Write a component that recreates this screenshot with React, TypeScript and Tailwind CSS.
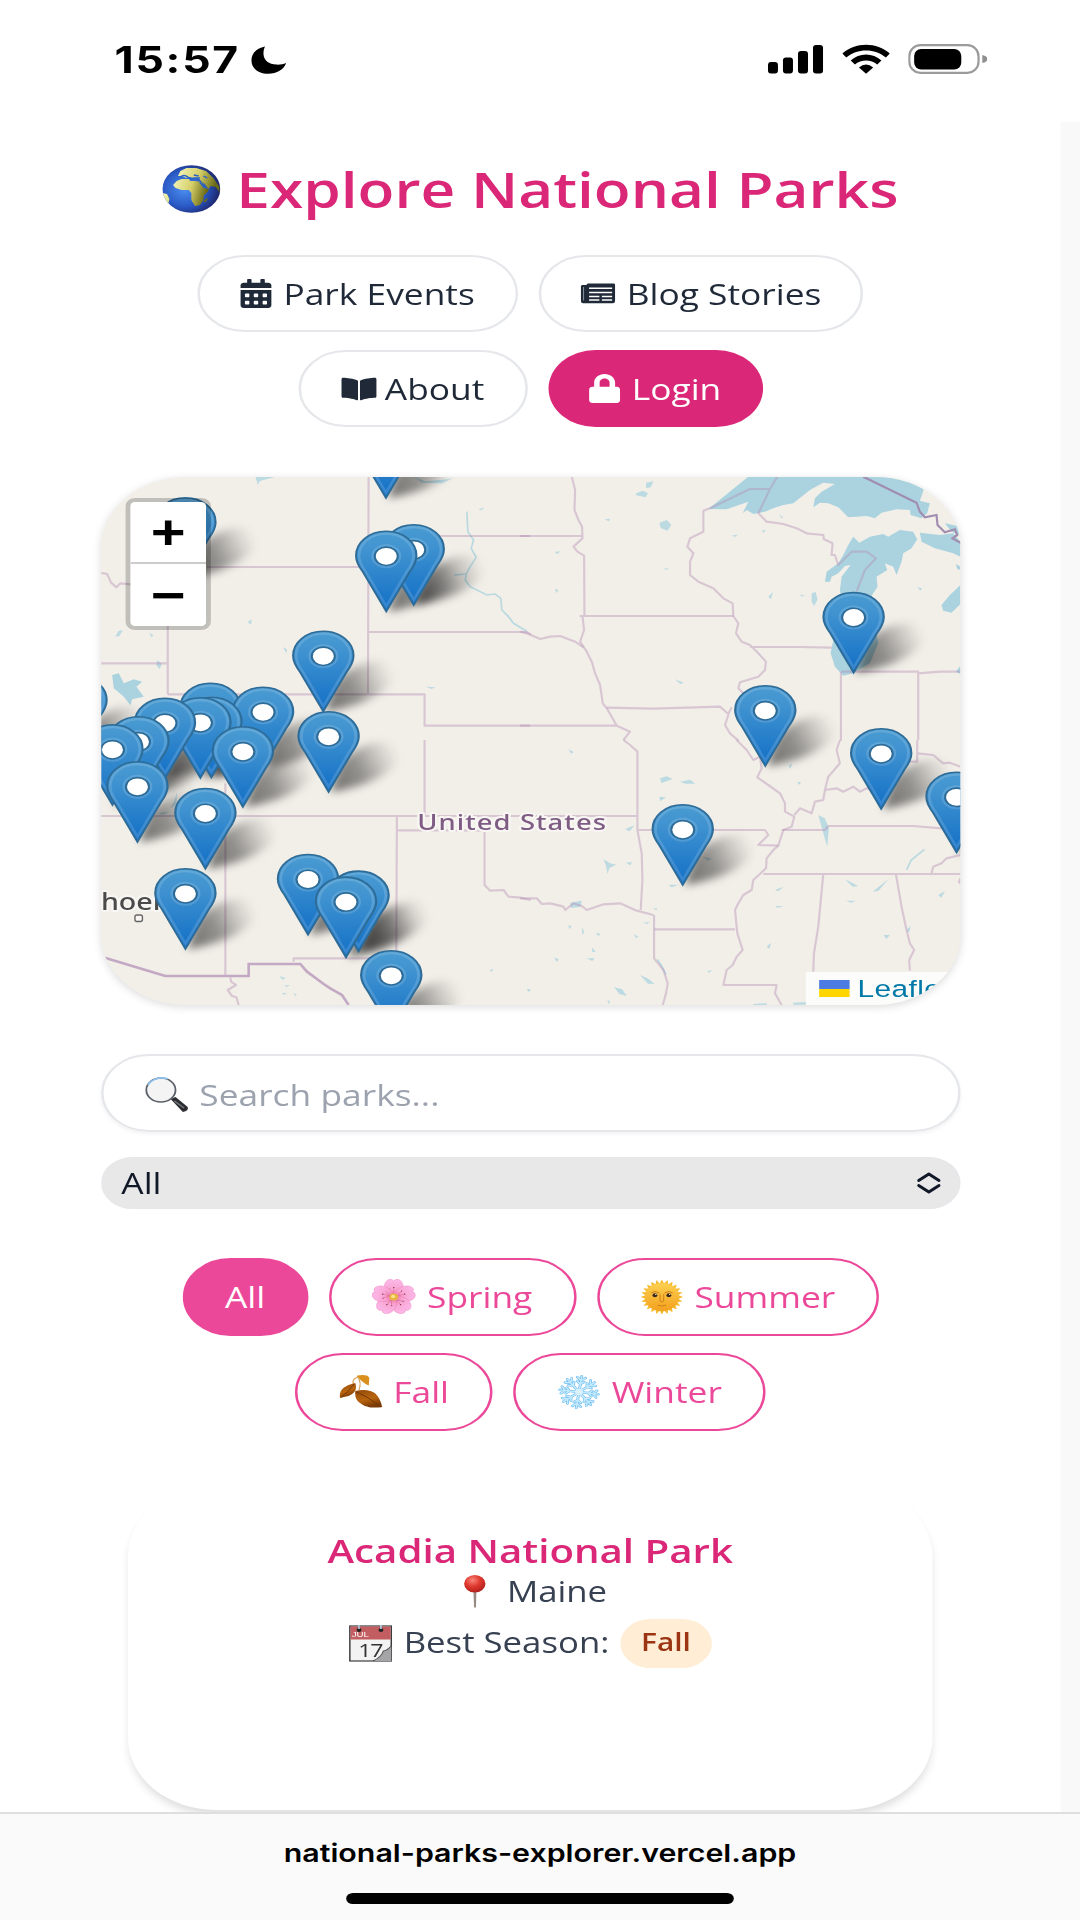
import type { ReactNode } from "react";
import { FaCalendarAlt, FaBookOpen, FaLock } from "react-icons/fa";

/* ---------- emoji drawings ---------- */

function Globe() {
  return (
    <svg viewBox="0 0 48 48" className="size-[48px] shrink-0">
      <defs>
        <radialGradient id="sea" cx=".38" cy=".5" r=".62">
          <stop offset="0" stopColor="#4b8ff0" />
          <stop offset=".6" stopColor="#2a58c4" />
          <stop offset="1" stopColor="#1c2468" />
        </radialGradient>
        <linearGradient id="land" x1="0" y1="0" x2="1" y2=".2">
          <stop offset="0" stopColor="#f3f5b8" />
          <stop offset=".55" stopColor="#d5cf68" />
          <stop offset="1" stopColor="#6b6a16" />
        </linearGradient>
        <clipPath id="disc"><circle cx="24" cy="24" r="23.7" /></clipPath>
      </defs>
      <circle cx="24" cy="24" r="23.7" fill="url(#sea)" />
      <g clipPath="url(#disc)" fill="url(#land)">
        <path d="M9 20l3-4 4-2 6 0 1 2 4 0 6 1 2 6 3 1 0 2-4 5 0 4-3 5-4 1-3-6 0-7-2-3-6 0-5-2z" />
        <path d="M13 11l2-5 5-3 8 0 8 3 6 7 5 9 0 5-3-5-4-1-2 3-3-5-3-3-2-3-4 0-3-1-3 1-4-2z" />
        <path d="M0 28l4 1 2 5-1 5-4-4zM35.500 34l2-1-1.500 4-2 0z" />
      </g>
      <path d="M15 12q3-3 6 0t5 1l5 0M31 17l4 6M26 10l4 1M34 11l3 2" stroke="#2b62c8" strokeWidth="1.500" fill="none" />
    </svg>
  );
}

function Lens() {
  return (
    <svg viewBox="0 0 36 36" className="size-[36px] shrink-0">
      <path d="M21 22l4-2 10 10q1 4-4 5z" fill="#2b2d30" />
      <path d="M24 24l8 7" stroke="#75797e" strokeWidth="1.2" />
      <circle cx="13" cy="13" r="12" fill="#f4f4f5" stroke="#5b6169" strokeWidth="1.5" />
      <path d="M2.500 8a12 12 0 0 1 16-6" stroke="#8fc3ee" strokeWidth="1.600" fill="none" />
    </svg>
  );
}

function Blossom() {
  return (
    <svg viewBox="-18 -18 36 36" className="size-[36px] shrink-0">
      <defs>
        <radialGradient id="petal" gradientUnits="userSpaceOnUse" cx="0" cy="0" r="18">
          <stop offset="0" stopColor="#e8689f" />
          <stop offset=".4" stopColor="#f8a3d0" />
          <stop offset="1" stopColor="#fcb9ea" />
        </radialGradient>
      </defs>
      {[0, 72, 144, 216, 288].map((a) => (
        <g key={a} transform={`rotate(${a})`}>
          <path d="M0 1C-10-5-9-15-4-17.500Q-1-18.500 0-16Q1-18.500 4-17.500C9-15 10-5 0 1z" fill="url(#petal)" stroke="#f184bd" strokeWidth=".4" />
          <path d="M0-3V-9M0-3L-3.500-8M0-3L3.500-8" stroke="#d4608c" strokeWidth=".4" />
          <circle cx="0" cy="-9.500" r=".6" fill="#7c2140" />
          <circle cx="-3.800" cy="-8" r=".5" fill="#7c2140" />
        </g>
      ))}
      <circle r="3.600" fill="#e9b43f" />
      <circle r="1.700" cx="-.5" cy="-.6" fill="#f9e08a" />
    </svg>
  );
}

function Sun() {
  return (
    <svg viewBox="-18 -18 36 36" className="size-[36px] shrink-0">
      <defs>
        <linearGradient id="face" x1="0" y1="0" x2="0" y2="1">
          <stop offset="0" stopColor="#fdd04f" />
          <stop offset="1" stopColor="#f3a01f" />
        </linearGradient>
      </defs>
      {Array.from({ length: 24 }, (_, i) => (
        <path key={i} d="M-2-13L0-17.500L2-13z" fill="#f6b92c" transform={`rotate(${i * 15})`} />
      ))}
      <circle r="14" fill="url(#face)" />
      <path d="M-9-4q3-3 7 0M2-4q4-3 7 0M-1.500-3v7l1.500 1 1.500-1v-7M-3.500 8q3.500 2 7 0" stroke="#c87a12" strokeWidth=".8" fill="none" />
      <circle cx="-5.700" cy="-1.800" r="2" fill="#3b2a1c" />
      <circle cx="5.700" cy="-1.800" r="2" fill="#3b2a1c" />
      <circle cx="-5" cy="-2.500" r=".6" fill="#fff" />
      <circle cx="6.400" cy="-2.500" r=".6" fill="#fff" />
    </svg>
  );
}

function Leaves() {
  return (
    <svg viewBox="0 0 36 36" className="size-[36px] shrink-0">
      <defs>
        <linearGradient id="leaf" x1="0" y1="0" x2=".4" y2="1">
          <stop offset="0" stopColor="#8f4808" />
          <stop offset=".6" stopColor="#b9650f" />
          <stop offset="1" stopColor="#7c3a06" />
        </linearGradient>
      </defs>
      <path d="M15 2Q19 8 16.500 16M16 3Q10 5 12 11" stroke="#d9a75c" strokeWidth="1" fill="none" />
      <path d="M1 24Q-1 13 13.500 9Q16 18 8 22Q4 23 1 24z" fill="url(#leaf)" />
      <path d="M15 1.500Q24 0 25 4L24.500 11.500Q18 8 15 1.500z" fill="#d9901c" />
      <path d="M13.500 17Q23 14 29.500 19Q34 24 35.500 33Q24 35 18.500 30Q12.500 26 13.500 17z" fill="url(#leaf)" />
      <path d="M14 18Q25 23 34 33M12.500 10Q8 18 2 23" stroke="#6d3506" strokeWidth=".8" fill="none" />
    </svg>
  );
}

function Snowflake() {
  return (
    <svg viewBox="-18 -18 36 36" className="size-[36px] shrink-0">
      {["#6dbcf0", "#c4eafd"].map((c, k) => (
        <g key={c} stroke={c} strokeWidth={k ? 1.3 : 2.4} strokeLinecap="round" fill="none">
          {[8, 53, 98, 143, 188, 233, 278, 323].map((a) => (
            <path key={a} transform={`rotate(${a})`} d="M0 0V-16M0-8L-2.800-10.500M0-8L2.800-10.500M0-11.500L-3.400-14.500M0-11.500L3.400-14.500" />
          ))}
        </g>
      ))}
      <circle r="3.200" fill="#d8f1fd" />
    </svg>
  );
}

function Pushpin() {
  return (
    <svg viewBox="0 0 36 36" className="size-[35px] shrink-0">
      <defs>
        <radialGradient id="head" cx=".4" cy=".3" r=".7">
          <stop offset="0" stopColor="#f8857a" />
          <stop offset=".5" stopColor="#e03a30" />
          <stop offset="1" stopColor="#b3211d" />
        </radialGradient>
      </defs>
      <path d="M16.800 16h2.600l-.4 18.500h-1.600z" fill="#978b86" />
      <circle cx="18" cy="10" r="9" fill="url(#head)" />
    </svg>
  );
}

function TearOff() {
  return (
    <svg viewBox="0 0 36 38" className="h-[38px] w-[36px] shrink-0">
      <rect x="1" y="2" width="34" height="35" fill="#f3f3f3" stroke="#3c3c3f" strokeWidth="1.200" />
      <rect x="1.500" y="2.500" width="33" height="13" fill="#c25d61" />
      <text x="2.500" y="13.500" fontSize="8" fill="#fff" fontFamily="Liberation Sans, sans-serif">JUL</text>
      <text x="8" y="33.500" fontSize="19" letterSpacing="-1.200" fill="#333" fontFamily="Open Sans, sans-serif">17</text>
      <path d="M21 37Q27 33 28.500 27Q31 27 35 22V37z" fill="#a5a5a7" />
      <path d="M20 37Q27 33 28.500 27Q31 27 35 22" stroke="#555" strokeWidth="1" fill="none" />
      <circle cx="8.500" cy="6" r="2" fill="#222" />
      <circle cx="26.500" cy="6" r="2" fill="#222" />
      <path d="M8.500 1v4M26.500 1v4" stroke="#a9c4d4" strokeWidth="1.500" />
    </svg>
  );
}

function Newspaper() {
  return (
    <svg viewBox="0 0 36 21" preserveAspectRatio="none" className="h-[21px] w-[29px] shrink-0">
      <path d="M7 2H2Q.7 2 .7 3.500V18Q.7 20.300 3 20.300H33Q35.500 20.300 35.500 18V1.800Q35.500 .5 34 .5H8Q6.500 .5 6.500 2" fill="#1f2937" />
      <path d="M3.400 4V17.500" stroke="#8b929c" strokeWidth="1" />
      <path d="M9 5.200H32.500M9 9.400H32.500M9 13.400H19.500M22 13.400H32.500M9 17H19.500M22 17H32.500" stroke="#fff" strokeWidth="1.500" />
    </svg>
  );
}

/* ---------- status bar ---------- */

function StatusBar() {
  return (
    <header className="flex h-[122px] items-start justify-between pr-[76px] pl-[94px] pt-[40px]">
      <div className="flex items-center">
        <span className="font-['Inter'] text-[36.500px] leading-[40px] font-bold tracking-[1.400px]">15:57</span>
        <svg viewBox="0 0 35 28" preserveAspectRatio="none" className="ml-[9px] h-[28px] w-[29px]">
          <path d="M13.800 .5C5.500 2 .3 7.500 .3 14.500C.3 22.500 7.500 27.800 17 27.800C25.500 27.800 32.500 23.500 34.700 17C31.500 18.300 28.500 18.800 25 18.600C17.500 18.200 12.800 14.500 12.300 8.500C12.100 5.500 12.600 3 13.800 .5z" />
        </svg>
      </div>
      <div className="flex items-start gap-[15px] pt-[4px]">
        <svg viewBox="0 0 56 30" preserveAspectRatio="none" className="h-[30px] w-[46px]">
          <rect x="0" y="18" width="10" height="11.500" rx="3" />
          <rect x="15" y="13.500" width="10" height="16" rx="3" />
          <rect x="30" y="7" width="10" height="22.500" rx="3" />
          <rect x="45" y="1" width="10" height="28.500" rx="3" />
        </svg>
        <svg viewBox="0 0 48 30" preserveAspectRatio="none" className="h-[30px] w-[39px]">
          <path d="M0 9.500C13-2.200 35-2.200 48 9.500L44 13.500C33 4 15 4 4 13.500z" />
          <path d="M8.500 16.500C17 8.500 31 8.500 39.500 16.500L35.300 20.500C29 15 19 15 12.700 20.500z" />
          <path d="M16.800 23.500Q24 17.500 31.200 23.500L24 29.800z" />
        </svg>
        <svg viewBox="0 0 79 30" preserveAspectRatio="none" className="h-[30px] w-[65px]">
          <rect x="1.200" y="1.200" width="69" height="27.600" rx="11" fill="none" stroke="#9b9b9b" strokeWidth="2.200" />
          <rect x="6" y="5" width="47" height="20.500" rx="7" />
          <path d="M74 11q5 1 5 4t-5 4z" fill="#8f8f8f" />
        </svg>
      </div>
    </header>
  );
}

/* ---------- map ---------- */

const crop = {
  nw: "translate(90 470) scale(.33333)",
  ne: "translate(520 470) scale(.33333)",
  sw: "translate(90 740) scale(.33333)",
  se: "translate(520 740) scale(.33333)",
};

const borders: [keyof typeof crop, string][] = [
  ["nw", "M835 20L833 673M350 291H833M30 308L50 312L62 338L78 352L90 340L122 343M232 291V673M30 580H232M232 673H1003V767H1320M835 486H1310L1322 494M835 198H1320"],
  ["ne", "M155 20L165 60L163 120L175 150L186 170L187 205L160 230L172 245L192 257L193 438M178 438H640M187 438L192 480L180 515L200 545L215 575L225 610L240 645L248 700L260 715L290 767L330 785L310 810M0 198H187M0 767H290"],
  ["ne", "M0 485L20 490L60 507L90 500L120 498L165 515L190 532M260 713L400 716L600 710L625 732L635 712M625 735L615 765L630 790L655 812M570 115L550 122L550 185L510 205L502 230L520 250L510 275L510 315L535 335L580 355L610 385L638 400L640 438L655 460L648 490L665 515L690 525L715 550L738 575L735 600L715 620L660 637L655 655L670 670M690 531H840L935 533"],
  ["ne", "M570 115L690 57H750L772 20M750 57L715 130L740 155L790 162L830 175L860 190L910 195L912 208L938 220L935 255L945 255L955 285L995 245H1040L1068 265L1035 300L1010 365M963 605V812M965 605H1195V810M1195 610L1260 605H1322"],
  ["sw", "M30 228H1320M1003 0V228M405 130V708M920 228L918 655M920 271H1183V435L1200 452L1240 450L1255 470L1290 473L1322 480M610 665V655H918M420 712L422 725L437 735L412 750L425 768L438 772L445 795"],
  ["se", "M0 228H352M310 0L330 15L352 35V270L365 340L367 420L362 510M352 270H735L745 285L715 315L775 317M0 475L50 475L65 492L90 490L130 500L135 510L160 490L185 498L200 510L250 493L300 490L350 512L400 525M402 568H645"],
  ["se", "M402 525V655L430 690L443 730L438 760L428 795M650 0L680 30L700 60L720 50L725 85L712 112L745 135L780 160L795 190L795 215L823 230L815 260L790 270L775 317L760 330L740 355L738 385L722 400L700 420L695 450L670 465L655 490L645 510L648 540L652 580L668 630L650 650L638 675L620 690L610 735H770L765 760L785 795"],
  ["se", "M823 225L840 205L875 220L885 185L910 180L915 150L925 110L960 70L950 30L960 0M915 150L950 145L970 155L1000 140L1020 155L1040 145L1070 152M785 270H915L925 258H1180L1265 265M1192 0V65L1170 65M1192 40L1240 45L1270 70L1290 68L1322 80M730 402H1322M910 402L895 560L882 640L880 695M1128 402L1145 500L1160 570L1170 610L1183 630L1168 660L1170 692M1235 400L1240 380L1265 370L1280 355L1322 345M1322 415l-5 10 5 6"],
];

const bigWater: [keyof typeof crop, string][] = [
  ["ne", "M565 117L605 85L685 20H1130L1180 35L1212 58L1200 92L1230 100L1222 130L1205 145L1172 135L1170 120L1130 118L1085 128L1065 145L1040 138L985 142L955 112L925 100L900 98L880 112L885 85L905 65L945 42L910 38L870 60L820 100L790 105L760 115L735 125L700 132L680 120L668 130L685 95L620 118Z"],
  ["ne", "M1000 200L1018 218L1050 200L1090 192L1105 200L1140 180L1180 185L1192 208L1175 235L1150 250L1145 275L1130 315L1120 290L1095 280L1102 300L1070 320L1073 350L1050 385L1075 520L1050 580L1000 610L970 617L945 590L932 550L940 510L970 420L960 360L965 320L992 285L975 288L955 310L935 320L930 335L915 335L920 305L955 280L970 255L985 225Z"],
  ["ne", "M1200 188L1260 195L1300 190L1322 215V260L1300 250L1245 235L1205 215ZM1275 160L1300 165L1322 170V195L1295 185ZM1265 405L1290 375L1322 345V402L1295 428L1270 422ZM1308 282l14 8v10l-10-3zM1308 605l14-18v25z"],
  ["nw", "M65 615L85 610L100 640L130 628L155 635L138 650L160 680L125 688L120 706L100 680L70 655Z"],
];

const ponds: [keyof typeof crop, string][] = [
  ["ne", "M378 38l22-4-8 18-14 2zM348 70l20-8 16 8-8 12-28-6zM418 158l22-8 14 14-12 18-20-8zM254 148l16-2-4 8zM104 246l16-2-8 8zM432 295l16 1-10 4zM104 356l10 4-4 10zM465 628l26 10-10 4zM636 196l18-2-10 7zM725 183l12-4-5 9zM875 370l12-4 6 22-10 20-8-12zM745 380l14-14-6 22zM840 374l14 2-8 4zM1193 350l14 6-6 6zM778 132l12 12-6 0z"],
  ["nw", "M75 500l8-16 14-4-10 18zM200 570l14 12-6 16-10-12zM472 456l12-8-2 16zM578 532l12 6-2 12zM1008 650l28 2-12 5zM1165 118l18-6-10 9zM177 488l12 8-6 6zM495 20l8 25 5-12 50-13zM970 20l35 14 80-8-30 14-60-2z"],
  ["sw", "M240 205l12-25 8-24-2 38zM202 220l36-6-20 10zM568 708l18 6-10 5zM582 736l18-1-12 6zM575 760l14-2-8 7zM610 760l10 4-6 4zM1198 690l12-2-6 8zM1310 750l10-2v6z"],
  ["se", "M895 225l20 10 12 30-5 55-12-40zM420 115l20-6 18 8-34 12zM480 125l30-6 16 12-30 0zM418 170l20 2-18 12zM145 28l16 8-8 5zM250 358l20 12 18 4-20 10-6 18-4-24zM318 368l18-2-6 10zM315 268l28-12-14 18zM445 434l30 0-20 8zM550 350l26 6-14 6zM805 78l12-8-6 16zM832 125l12 2-8 8zM765 498l26 0-18 5zM765 450l26-10-16 14zM975 418l40 20-16 2zM1058 455l48-38-30 35zM1255 465l20-12-10 20zM1090 585l20 0-10 12zM740 620l14-12-6 18zM360 705l22 10 22 16-20 0zM282 742l24 6 14 20-22-6zM200 655l24 0-8 8zM215 622l12 14-10 0zM145 555l10 4-8 8zM185 560l8 18-6 6zM228 578l14 4-8 6zM340 582l16 8-8 4zM370 548l20-2-10 6zM102 652l14 6-6 8zM20 748l10 0-4 8zM262 780l8 4-4 8zM560 694l16-4-8 8zM700 792l40-2v8h-40zM820 788l40-2v8h-40zM978 482l30 0-14 6zM1160 570l12-12-4 20zM400 505l12 0-4 6zM150 488l35-6-4 18-28 4z"],
];

const rivers: [keyof typeof crop, string][] = [
  ["nw", "M1130 125L1133 185L1150 210L1143 235L1158 262L1140 290L1128 312L1092 315M1128 312L1125 330L1140 350L1190 375L1215 372L1232 385L1235 420L1255 440L1270 460L1310 484"],
  ["se", "M1160 390l14-30 40-32"],
  ["se", "M412 658l14 22 12 24"],
];

const pins: [number, number][] = [
  [385.7, 499], [185, 579], [413.5, 606], [386, 612.5], [853.7, 673.7], [323, 712.5], [76, 757],
  [210, 764.5], [765.3, 767], [262.7, 768.5], [211, 778.500], [200, 779], [164.5, 779.5], [328.3, 793],
  [138, 798], [112, 806], [242.5, 808], [881.3, 810], [137, 843], [956.7, 853.5], [205, 869.7],
  [682.7, 886], [307.7, 935.7], [185, 950], [358.3, 952.3], [345.7, 958.3], [391, 1032],
];

function ParkMap() {
  return (
    <section className="relative h-[528px] w-[705px] overflow-hidden rounded-[70px] bg-[#f2efe9] shadow-[0_2px_8px_rgba(0,0,0,0.14)]">
      <svg viewBox="100.700 477 860 528" preserveAspectRatio="none" className="h-full w-full">
        <defs>
          <linearGradient id="pin" x1="0" y1="0" x2="0" y2="1">
            <stop offset="0" stopColor="#4a9bd2" />
            <stop offset=".25" stopColor="#4093d0" />
            <stop offset="1" stopColor="#126fc6" />
          </linearGradient>
          <linearGradient id="shade" gradientUnits="userSpaceOnUse" x1="0" y1="0" x2="72" y2="-36">
            <stop offset="0" stopColor="#000" stopOpacity=".55" />
            <stop offset=".45" stopColor="#000" stopOpacity=".4" />
            <stop offset=".8" stopColor="#000" stopOpacity=".12" />
            <stop offset="1" stopColor="#000" stopOpacity="0" />
          </linearGradient>
          <filter id="soft" x="-30%" y="-30%" width="160%" height="160%"><feGaussianBlur stdDeviation="4" /></filter>
          <g id="shadow">
            <path d="M2 -1L10 -26C24 -52 72 -60 72 -40C70 -20 36 -6 2 -1z" fill="url(#shade)" filter="url(#soft)" />
          </g>
          <g id="marker" transform="scale(2.500 2) translate(-12.500 -41)">
            <path d="M12.500 .4C5.600 .4 .4 6 .4 12.600C.4 15.600 1.700 18.300 3.200 20.800L12.500 40.500L21.800 20.800C23.300 18.300 24.600 15.600 24.600 12.600C24.600 6 19.400 .4 12.500 .4z" fill="url(#pin)" stroke="#2e6c97" strokeWidth=".8" />
            <path d="M12.500 1.600C6.200 1.600 1.600 6.600 1.600 12.600C1.600 15.400 2.700 17.900 4.200 20.400L12.500 37.900L20.800 20.400C22.300 17.900 23.400 15.400 23.400 12.600C23.400 6.600 18.800 1.600 12.500 1.600z" fill="none" stroke="#fff" strokeOpacity=".14" strokeWidth="1.100" />
            <circle cx="12.500" cy="12.900" r="5.500" fill="none" stroke="#fff" strokeOpacity=".14" strokeWidth="1" />
            <circle cx="12.500" cy="12.900" r="4.600" fill="#fff" stroke="#2e6c97" strokeWidth=".8" />
          </g>
        </defs>
        {bigWater.map(([c, d], i) => <path key={i} transform={crop[c]} d={d} fill="#aad3df" />)}
        {ponds.map(([c, d], i) => <path key={i} transform={crop[c]} d={d} fill="#aad3df" fillOpacity=".75" />)}
        {rivers.map(([c, d], i) => <path key={i} transform={crop[c]} d={d} fill="none" stroke="#aad3df" strokeOpacity=".8" strokeWidth="5" />)}
        {borders.map(([c, d], i) => (
          <path key={i} transform={crop[c]} d={d} fill="none" stroke="#b48fb5" strokeOpacity=".42" strokeWidth="6.500" strokeLinejoin="round" />
        ))}
        <path transform={crop.ne} d="M1030 20L1190 98L1200 125L1215 142L1250 135L1253 165L1275 187L1305 178L1312 195L1298 205L1325 220" fill="none" stroke="#a18db0" strokeWidth="6.500" />
        <path transform={crop.sw} d="M38 652L225 708H475V672H630L650 695L700 732L720 745L755 765L775 795" fill="none" stroke="#c3a9c3" strokeWidth="8" />
        <g fontFamily="Noto Sans, Open Sans, sans-serif" stroke="#f8f6f3" strokeWidth="4" strokeLinejoin="round" style={{ paintOrder: "stroke" }}>
          <text transform="translate(417 829.500) scale(1.219 1)" fontSize="22.500" fontWeight="500" textLength="155" fill="#7e5c84">United States</text>
          <text transform="translate(83 909.500) scale(1.219 1)" fontSize="23.500" fontWeight="500" fill="#4a4a4a">Phoenix</text>
        </g>
        <rect x="134.500" y="915" width="7.500" height="6.500" rx="2" fill="#f8f6f3" stroke="#666" strokeWidth="1.400" />
        {pins.map(([x, y], i) => <use key={i} href="#shadow" x={x} y={y} />)}
        {pins.map(([x, y], i) => <use key={i} href="#marker" transform={`translate(${x} ${y})`} />)}
      </svg>
      <div className="absolute top-[21px] left-[20.500px] flex w-[70px] flex-col overflow-hidden rounded-[8px] border-[4px] border-black/20 bg-clip-padding text-center font-['Liberation_Sans'] text-[49px] font-bold">
        <button className="h-[62px] border-b-2 border-[#ccc] bg-white leading-[59px]">+</button>
        <button className="h-[62px] bg-white leading-[57px]">−</button>
      </div>
      <div className="absolute right-0 bottom-0 flex h-[33px] w-[127px] items-center bg-white/80 pl-[11px]">
        <span className="flex h-[17px] w-[25px] flex-col">
          <i className="h-1/2 bg-[#4c7be1]" />
          <i className="h-1/2 bg-[#ffd500]" />
        </span>
        <a className="ml-[7px] font-['Liberation_Sans'] text-[24.500px] leading-[31px] tracking-[0.300px] text-[#0078a8]">Leaflet</a>
      </div>
    </section>
  );
}

/* ---------- pills ---------- */

function NavPill({ icon, label, width, primary }: { icon: ReactNode; label: string; width: string; primary?: boolean }) {
  return (
    <a className={`flex h-[77px] items-center justify-center gap-[9px] rounded-full text-[29px] ${width} ${primary ? "bg-[#db2777] text-white" : "border-2 border-[#e5e7eb] text-[#1f2937]"}`}>
      {icon}
      <span className="pt-[1px]">{label}</span>
    </a>
  );
}

function SeasonPill({ icon, label, width, active }: { icon?: ReactNode; label: string; width: string; active?: boolean }) {
  return (
    <button className={`flex h-[78px] items-center justify-center gap-[9px] rounded-full border-2 border-[#ec4899] text-[29px] ${width} ${active ? "bg-[#ec4899] text-white" : "text-[#ec4899]"}`}>
      {icon}
      <span>{label}</span>
    </button>
  );
}

export default function App() {
  return (
    <div className="h-[1920px] w-[1080px] overflow-hidden bg-white">
      <div className="flex h-[1920px] w-[886px] origin-top-left scale-x-[1.21896] flex-col font-['Open_Sans',sans-serif] text-black">
        <StatusBar />
        <div className="flex h-[1690px] overflow-hidden">
          <main className="flex w-[870px] shrink-0 flex-col items-center">
            <h1 className="mt-[34px] flex h-[66px] items-center gap-[13px] text-[49.500px] font-semibold whitespace-nowrap text-[#db2777]">
              <Globe />
              <span>Explore National Parks</span>
            </h1>
            <nav className="mt-[33px] flex flex-col items-center gap-[18px]">
              <div className="flex gap-[17px]">
                <NavPill width="w-[263px]" label="Park Events" icon={<FaCalendarAlt className="h-[29px] w-[26px]" />} />
                <NavPill width="w-[266px]" label="Blog Stories" icon={<Newspaper />} />
              </div>
              <div className="flex gap-[17px]">
                <NavPill width="w-[188px]" label="About" icon={<FaBookOpen className="mr-[-2px] h-[26px] w-[29px]" />} />
                <NavPill width="w-[176px]" label="Login" primary icon={<FaLock className="h-[29px] w-[26px]" />} />
              </div>
            </nav>
            <div className="mt-[50px]"><ParkMap /></div>
            <label className="mt-[49px] flex h-[78px] w-[705px] items-center gap-[9px] rounded-full border-2 border-[#e5e7eb] pt-[3px] pl-[34px] text-[29px] text-[#9ca3af] shadow-[0_2px_4px_rgba(0,0,0,0.06)]">
              <Lens />
              <span>Search parks...</span>
            </label>
            <div className="mt-[25px] flex h-[52px] w-[705px] items-center justify-between rounded-full border border-[#e5e7eb] bg-[#e8e8e8] pr-[15px] pl-[16px] text-[29px] text-[#111827]">
              <span>All</span>
              <svg viewBox="0 0 24 24" className="h-[24px] w-[20px]" preserveAspectRatio="none" fill="none" stroke="#111827" strokeWidth="2.900" strokeLinecap="round" strokeLinejoin="round">
                <path d="M2 9.500L12 3L22 9.500M2 14.500L12 21L22 14.500" />
              </svg>
            </div>
            <div className="mt-[49px] flex flex-col items-center gap-[17px]">
              <div className="flex gap-[17px]">
                <SeasonPill width="w-[103px]" label="All" active />
                <SeasonPill width="w-[203px]" label="Spring" icon={<Blossom />} />
                <SeasonPill width="w-[231px]" label="Summer" icon={<Sun />} />
              </div>
              <div className="flex gap-[17px]">
                <SeasonPill width="w-[162px]" label="Fall" icon={<Leaves />} />
                <SeasonPill width="w-[207px]" label="Winter" icon={<Snowflake />} />
              </div>
            </div>
            <article className="mt-[54px] flex h-[325px] w-[660px] shrink-0 flex-col items-center rounded-[72px] bg-white text-[28.500px] text-[#374151] shadow-[0_6px_9px_-2px_rgba(0,0,0,0.15)]">
              <h2 className="mt-[44px] text-[33px] leading-[44px] font-semibold text-[#db2777]">Acadia National Park</h2>
              <p className="mt-[-2px] flex h-[40px] items-center gap-[9px] leading-[40px]">
                <Pushpin />
                <span>Maine</span>
              </p>
              <p className="mt-[7px] flex h-[50px] items-center gap-[9px]">
                <TearOff />
                <span className="mt-[-2px]">Best Season:</span>
                <span className="flex h-[49px] w-[75px] items-center justify-center rounded-full bg-[#ffedd5] pb-[1px] text-[24.500px] font-semibold text-[#9a3412]">Fall</span>
              </p>
            </article>
          </main>
          <aside className="w-[16px] bg-[#f9f9f9]" />
        </div>
        <footer className="flex h-[108px] flex-col items-center border-t-2 border-[#dedede] bg-[#fafafa]">
          <span className="mt-[22px] font-['Inter'] text-[24.900px] leading-[34px] font-semibold">national-parks-explorer.vercel.app</span>
          <span className="mt-[23px] h-[11px] w-[318px] rounded-full bg-black" />
        </footer>
      </div>
    </div>
  );
}
